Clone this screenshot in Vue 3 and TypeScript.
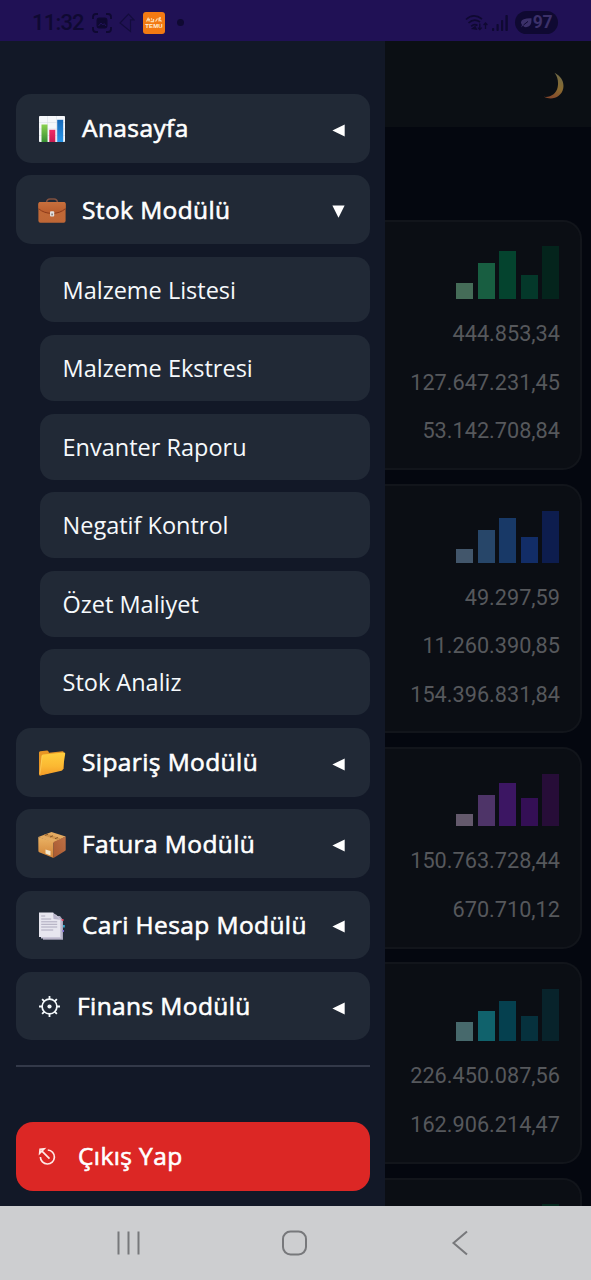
<script setup lang="ts">
interface MenuItem {
  label: string
  icon: string
  open?: boolean
  children?: string[]
}
interface StatCard {
  bars: { height: number; color: string }[]
  values: string[]
}

const menu: MenuItem[] = [
  { label: 'Anasayfa', icon: 'chart' },
  {
    label: 'Stok Modülü',
    icon: 'case',
    open: true,
    children: ['Malzeme Listesi', 'Malzeme Ekstresi', 'Envanter Raporu', 'Negatif Kontrol', 'Özet Maliyet', 'Stok Analiz'],
  },
  { label: 'Sipariş Modülü', icon: 'folder' },
  { label: 'Fatura Modülü', icon: 'box' },
  { label: 'Cari Hesap Modülü', icon: 'pages' },
  { label: 'Finans Modülü', icon: 'gear' },
]

function bars(heights: number[], colors: string[]) {
  return heights.map((height, i) => ({ height, color: colors[i] }))
}

const cards: StatCard[] = [
  {
    bars: bars([16, 36, 48.5, 24, 53], ['#456c58', '#185e41', '#04432e', '#04382a', '#04241c']),
    values: ['444.853,34', '127.647.231,45', '53.142.708,84'],
  },
  {
    bars: bars([14, 33, 45, 26, 52], ['#42566b', '#274669', '#183967', '#122d67', '#0d1d4e']),
    values: ['49.297,59', '11.260.390,85', '154.396.831,84'],
  },
  {
    bars: bars([12.5, 31.5, 43.5, 28, 52.5], ['#64596c', '#4e3468', '#3c1663', '#340f55', '#270d38']),
    values: ['150.763.728,44', '670.710,12'],
  },
  {
    bars: bars([19, 30, 40.5, 25, 52.5], ['#47696c', '#10626c', '#05404f', '#06313d', '#08232b']),
    values: ['226.450.087,56', '162.906.214,47'],
  },
  {
    bars: bars([16, 36, 48.5, 24, 53], ['#456c58', '#185e41', '#04432e', '#04382a', '#06291f']),
    values: [],
  },
]
</script>

<template>
  <div class="screen">
    <header class="status">
      <span class="clock">11:32</span>
      <svg class="st-shot" width="20" height="20" viewBox="0 0 20 20" fill="none" stroke="#0f0932" stroke-width="1.8">
        <path d="M1 6V4q0-3 3-3h2M14 1h2q3 0 3 3v2M19 14v2q0 3-3 3h-2M6 19H4q-3 0-3-3v-2" />
        <rect x="5.4" y="5.4" width="9.2" height="9.2" rx="2" fill="#0f0932" />
        <path d="M6.5 13l2.5-3 1.8 2 1.4-1.4 1.8 2.4" stroke="#21125a" stroke-width="1" />
      </svg>
      <svg class="st-dir" width="16" height="20" viewBox="0 0 16 20" fill="none" stroke="#130c3c" stroke-width="1.2">
        <path d="M9.5 1.2L15 6.8h-3.5V18.5L1 10z" />
      </svg>
      <svg class="st-temu" width="22" height="22" viewBox="0 0 22 22">
        <rect width="22" height="22" rx="3" fill="#f37a12" />
        <path d="M3.500 9.500l1.600-3 1.300 3M7.500 9.500h3V7M12.500 9.500l2-3M16 9.500V7l2.500 2.500M4 7.500h3M8 6.500l1 1M16 6h2" stroke="#fbd9ac" stroke-width="1.300" fill="none" />
        <text x="11" y="15.800" text-anchor="middle" class="temu-text">TEMU</text>
      </svg>
      <i class="st-dot"></i>
      <div class="st-right">
        <svg width="23" height="18" viewBox="0 0 23 18" fill="none" stroke="#0f0932" stroke-width="1.7">
          <path d="M1 5.5Q8.5-1.5 17 5M3.5 9Q9 3.8 15 8M6.2 12.3Q9.3 9.5 12.5 11.5" />
          <path d="M8 14.5l2-1.5 1 2z" fill="#0f0932" />
          <path d="M14.8 9.5v6M12.9 13.6l1.9 2 1.9-2M20.5 15V9M18.6 11l1.9-2 1.9 2" stroke-width="1.3" />
        </svg>
        <svg class="st-signal" width="16" height="16" viewBox="0 0 16 16" fill="#0f0932">
          <rect y="13" width="2.2" height="3" rx=".8" />
          <rect x="4.5" y="9" width="2.2" height="7" rx=".8" />
          <rect x="9" y="5" width="2.2" height="11" rx=".8" />
          <rect x="13.4" width="2.4" height="16" rx=".8" />
        </svg>
        <div class="battery">
          <svg width="11" height="10" viewBox="0 0 11 10">
            <path d="M0 4Q1 0 10.500 .3Q11 8 6 9Q3 9.600 2 7.600L0 9.500 1 7Q-.2 5.500 0 4z" fill="#3b3069" />
            <path d="M2.500 7L7 3.400" stroke="#0f0932" stroke-width="1" />
          </svg>
          <span>97</span>
        </div>
      </div>
    </header>

    <main class="body">
      <aside class="drawer">
        <nav class="menu">
          <template v-for="item in menu" :key="item.label">
            <div class="module">
              <svg v-if="item.icon === 'chart'" class="emoji" width="28" height="28" viewBox="0 0 28 28">
                <defs>
                  <linearGradient id="bg1" x1="0" y1="0" x2="0" y2="1"><stop stop-color="#8bd250" /><stop offset="1" stop-color="#368e32" /></linearGradient>
                  <linearGradient id="bg2" x1="0" y1="0" x2="0" y2="1"><stop stop-color="#f02b66" /><stop offset="1" stop-color="#c71b50" /></linearGradient>
                  <linearGradient id="bg3" x1="0" y1="0" x2="0" y2="1"><stop stop-color="#1768b7" /><stop offset="1" stop-color="#2796ea" /></linearGradient>
                </defs>
                <rect x="1" y="1" width="26" height="26" rx=".8" fill="#f5f7fa" />
                <path d="M1 7.500h26M1 14h26M1 20.500h26M9.500 1v26M18.500 1v26" stroke="#d9dfe7" stroke-width=".6" />
                <rect x="3.500" y="9.500" width="6" height="17.500" fill="url(#bg1)" />
                <rect x="11.300" y="14.800" width="6" height="12.200" fill="url(#bg2)" />
                <rect x="19.200" y="4.800" width="6" height="22.200" fill="url(#bg3)" />
              </svg>

              <svg v-else-if="item.icon === 'case'" class="emoji" width="28" height="28" viewBox="0 0 28 28">
                <defs>
                  <linearGradient id="cs1" x1="0" y1="0" x2="0" y2="1"><stop stop-color="#c26a37" /><stop offset="1" stop-color="#bf6736" /></linearGradient>
                  <linearGradient id="cs2" x1="0" y1="0" x2="0" y2="1"><stop stop-color="#c8703d" /><stop offset="1" stop-color="#b95c2c" /></linearGradient>
                </defs>
                <path d="M8.500 5.500q.5-3.500 3.500-3.500h4q3 0 3.500 3.500" fill="none" stroke="#80503f" stroke-width="1.600" />
                <rect x=".4" y="5" width="27.200" height="20.800" rx="2" fill="url(#cs1)" />
                <path d="M.4 7q0-2 2-2h23.200q2 0 2 2v4.500Q22 16.300 14 16.300T.4 11.500z" fill="url(#cs2)" />
                <path d="M.6 11.700q5.400 4.700 13.400 4.700t13.400-4.700" fill="none" stroke="#8d3b1b" stroke-width="1" />
                <rect x="12" y="14.300" width="4.200" height="5.200" rx="1" fill="#e3e1df" />
                <rect x="13.300" y="16.500" width="1.600" height="1.800" fill="#857b76" />
              </svg>

              <svg v-else-if="item.icon === 'folder'" class="emoji" width="28" height="28" viewBox="0 0 28 28">
                <defs>
                  <linearGradient id="fd1" x1="0" y1="0" x2="0" y2="1"><stop stop-color="#ffcf3e" /><stop offset=".6" stop-color="#fbb832" /><stop offset="1" stop-color="#f39a27" /></linearGradient>
                </defs>
                <path d="M1 3.600q0-1.200 1.200-1.300L9 1.500q1 0 1.500 1l.5 1.200 13.500-1.500q1.200 0 1.200 1.300V20L2 26.600q-1 0-1-1.500z" fill="#e79524" />
                <path d="M5 5.600L26 3.500q1.300 0 1.200 1.200L24.800 20.500q-.3 1-1.300 1.200L2.500 26.600q-1 0-.9-1.200L3.700 7q.1-1.200 1.300-1.400z" fill="url(#fd1)" />
                <path d="M1.900 25L4.200 6.500" stroke="#ffdc74" stroke-width=".5" />
              </svg>

              <svg v-else-if="item.icon === 'box'" class="emoji" width="28" height="28" viewBox="0 0 28 28">
                <defs>
                  <linearGradient id="bx1" x1="0" y1="0" x2="0" y2="1"><stop stop-color="#eab264" /><stop offset="1" stop-color="#d18337" /></linearGradient>
                  <linearGradient id="bx2" x1="1" y1="0" x2="0" y2="1"><stop stop-color="#bd7146" /><stop offset="1" stop-color="#a9582f" /></linearGradient>
                </defs>
                <path d="M.3 6L13.500 1 27.700 5.500 15.500 12z" fill="#e4aa61" />
                <path d="M.3 6L15.500 11V27L1.200 21.300q-.8-.4-.8-1.500z" fill="url(#bx1)" />
                <path d="M15.500 11L27.700 5.500V18.500q0 1-.8 1.600L15.500 27z" fill="url(#bx2)" />
                <path d="M5 4.200L19.500 9.100 23 7.500 9 2.700z" fill="#d0944c" />
                <path d="M7 4.300l3-1M12 6l3-1.200M17 7.700l3-1.200" stroke="#7f5128" stroke-width=".9" />
                <path d="M7.500 18.400l5 1.700v4.300l-5-1.900z" fill="#f3e7ca" />
              </svg>

              <svg v-else-if="item.icon === 'pages'" class="emoji" width="28" height="28" viewBox="0 0 28 28">
                <path d="M5 4h17l3 4v19.800H5z" fill="#aaa7bd" />
                <rect x="23.500" y="7" width="2" height="2" fill="#e55069" />
                <rect x="25" y="13" width="1.800" height="2.500" fill="#34a7c8" />
                <rect x="24.500" y="18" width="1.500" height="2" fill="#7a6ad0" />
                <path d="M3 2.500h15l5.500 5.500v18.500H3z" fill="#c9c6d8" />
                <path d="M1 .6h14l7 7.200V25H1z" fill="#e7e6ef" />
                <path d="M15 .6l7 7.200-6.500-.7z" fill="#b7b3ca" />
                <path d="M3.200 4h4M3.200 7h10M3.200 9.800h16M3.200 12.300h16M3.200 15h16M3.200 18h12" stroke="#9f9bb1" stroke-width=".8" />
              </svg>

              <svg v-else class="gear" width="23" height="23" viewBox="0 0 23 23" fill="none" stroke="#f3f8fb">
                <circle cx="11.500" cy="11.500" r="7.400" stroke-width="1.700" />
                <path d="M11.500 1v3.500M11.500 18.500V22M1 11.500h3.500M18.500 11.500H22M4.100 4.100l2.400 2.400M16.500 16.500l2.400 2.400M4.100 18.900l2.400-2.400M16.500 6.500l2.400-2.400" stroke-width="1.800" />
                <circle cx="11.500" cy="11.500" r="2.100" fill="#f3f8fb" stroke="none" />
              </svg>
              <span class="label">{{ item.label }}</span>
              <svg class="arrow" width="13" height="13" viewBox="0 0 13 13" fill="#fff">
                <path v-if="item.open" d="M.4 .5h12.200L6.500 12.700z" />
                <path v-else d="M12.700 .4v12.200L.4 6.500z" />
              </svg>
            </div>
            <div v-for="child in item.children" :key="child" class="child">{{ child }}</div>
          </template>
        </nav>
        <hr class="rule" />
        <button class="logout" type="button">
          <svg width="19" height="19" viewBox="0 0 19 19" fill="none" stroke="#ffe9e6" stroke-width="1.700">
            <path d="M9.800 3A7 7 0 1 1 2.400 10" />
            <path d="M11.500 11.700L4 4.200M1.700 6.200L2.100 2.200l4-.4z" />
          </svg>
          <span>Çıkış Yap</span>
        </button>
      </aside>

      <section class="dash">
        <div class="topbar">
          <svg width="22" height="28" viewBox="0 0 22 28">
            <defs>
              <linearGradient id="mn" x1=".7" y1="0" x2=".4" y2="1"><stop stop-color="#6f6a48" /><stop offset=".55" stop-color="#896a30" /><stop offset="1" stop-color="#85482b" /></linearGradient>
            </defs>
            <path d="M11.500 .8C18 4 21.500 10 20.200 16.500C18.500 25 9 29 1 24.800C8 25.500 13.500 21.500 14.700 15C15.700 9.500 14.500 4.500 11.500 .8z" fill="url(#mn)" />
          </svg>
        </div>
        <div class="cards">
          <article v-for="(card, i) in cards" :key="i" class="card">
            <div class="bars">
              <i v-for="(bar, b) in card.bars" :key="b" :style="{ height: bar.height + 'px', background: bar.color }"></i>
            </div>
            <p v-for="value in card.values" :key="value">{{ value }}</p>
          </article>
        </div>
      </section>
    </main>

    <footer class="navbar">
      <svg width="26" height="26" viewBox="0 0 26 26" stroke="#77787b" stroke-width="2"><path d="M2.500 1.500v23M12.500 1.500v23M22.500 1.500v23" /></svg>
      <svg width="26" height="26" viewBox="0 0 26 26" fill="none" stroke="#77787b" stroke-width="2"><rect x="1" y="1.500" width="23" height="23" rx="7.500" /></svg>
      <svg width="26" height="26" viewBox="0 0 26 26" fill="none" stroke="#77787b" stroke-width="2"><path d="M20 1.500L6.500 13 20 24.500" /></svg>
    </footer>
  </div>
</template>

<style>
body {
  margin: 0;
  background: #04070f;
}
</style>

<style scoped>
.screen {
  width: 591px;
  height: 1280px;
  display: flex;
  flex-direction: column;
  overflow: hidden;
  font-family: 'Open Sans', 'Noto Sans', sans-serif;
}
.status {
  flex: none;
  height: 41px;
  box-sizing: border-box;
  padding: 4px 33px 0 32px;
  display: flex;
  align-items: center;
  background: #201155;
  color: #0f0932;
}
.clock {
  width: 60px;
  font: 500 22px/36px Roboto, sans-serif;
  letter-spacing: -0.8px;
}
.st-dir {
  margin-left: 7px;
}
.st-temu {
  margin-left: 8px;
}
.temu-text {
  font: 700 6px 'Liberation Sans', sans-serif;
  fill: #fff0d8;
  letter-spacing: 0.1px;
}
.st-dot {
  width: 7px;
  height: 7px;
  margin-left: 12px;
  border-radius: 50%;
  background: #0f0932;
}
.st-right {
  margin-left: auto;
  display: flex;
  align-items: center;
}
.st-signal {
  margin: 0 7px 0 4px;
}
.battery {
  width: 43px;
  height: 23px;
  border-radius: 12px;
  background: #0f0932;
  display: flex;
  align-items: center;
  justify-content: center;
  gap: 1px;
  font: 700 17.5px/23px Roboto, sans-serif;
  letter-spacing: -0.3px;
  color: #3b3069;
}
.body {
  flex: none;
  height: 1165px;
  display: flex;
  overflow: hidden;
}
.drawer {
  flex: none;
  width: 385px;
  box-sizing: border-box;
  padding: 53px 15px 0 16px;
  background: #121827;
}
.menu {
  display: flex;
  flex-direction: column;
  gap: 12.7px;
}
.module {
  height: 68.6px;
  box-sizing: border-box;
  padding: 0 25px 0 22px;
  border-radius: 15px;
  background: #212936;
  display: flex;
  align-items: center;
}
.emoji {
  margin: 2px 16px 0 0;
}
.gear {
  margin: 1px 16px 0 0;
}
.label {
  font-size: 24.5px;
  line-height: 34px;
  letter-spacing: 0.4px;
  color: #fff;
  -webkit-text-stroke: 0.6px #fff;
  white-space: nowrap;
}
.arrow {
  margin: 4px 0 0 auto;
}
.child {
  height: 65.9px;
  margin-left: 24px;
  padding-left: 22.5px;
  border-radius: 14px;
  background: #212936;
  font-size: 23.5px;
  line-height: 66px;
  color: #f6f9fc;
}
.rule {
  height: 2px;
  margin: 24.4px 0 55px;
  border: 0;
  background: #333949;
}
.logout {
  width: 100%;
  height: 69px;
  padding: 0 22px;
  border: 0;
  border-radius: 17px;
  background: #dc2725;
  display: flex;
  align-items: center;
  gap: 21px;
  font: 24.5px/34px 'Open Sans', sans-serif;
  letter-spacing: 0.4px;
  color: #fff;
  -webkit-text-stroke: 0.6px #fff;
}
.dash {
  flex: 1;
  background: #04070f;
}
.topbar {
  height: 86px;
  box-sizing: border-box;
  padding: 4px 26px 0 0;
  background: #0b0f14;
  display: flex;
  align-items: center;
  justify-content: flex-end;
}
.cards {
  padding: 93px 9px 0 0;
  display: flex;
  flex-direction: column;
  gap: 13.9px;
}
.card {
  box-sizing: border-box;
  padding: 24px 20px 12px 0;
  border: 2px solid #12151b;
  border-left: 0;
  border-radius: 0 19px 19px 0;
  background: #0b0e14;
}
.bars {
  height: 53px;
  margin-bottom: 11px;
  padding-right: 1px;
  display: flex;
  align-items: flex-end;
  justify-content: flex-end;
  gap: 4.5px;
}
.bars i {
  width: 17px;
}
.card p {
  margin: 0;
  font: 21.7px/48.6px Roboto, sans-serif;
  color: #56585c;
  text-align: right;
}
.navbar {
  flex: none;
  height: 74px;
  box-sizing: border-box;
  padding: 0 118px 0 116px;
  background: #cdced0;
  display: flex;
  align-items: center;
  justify-content: space-between;
}
</style>
